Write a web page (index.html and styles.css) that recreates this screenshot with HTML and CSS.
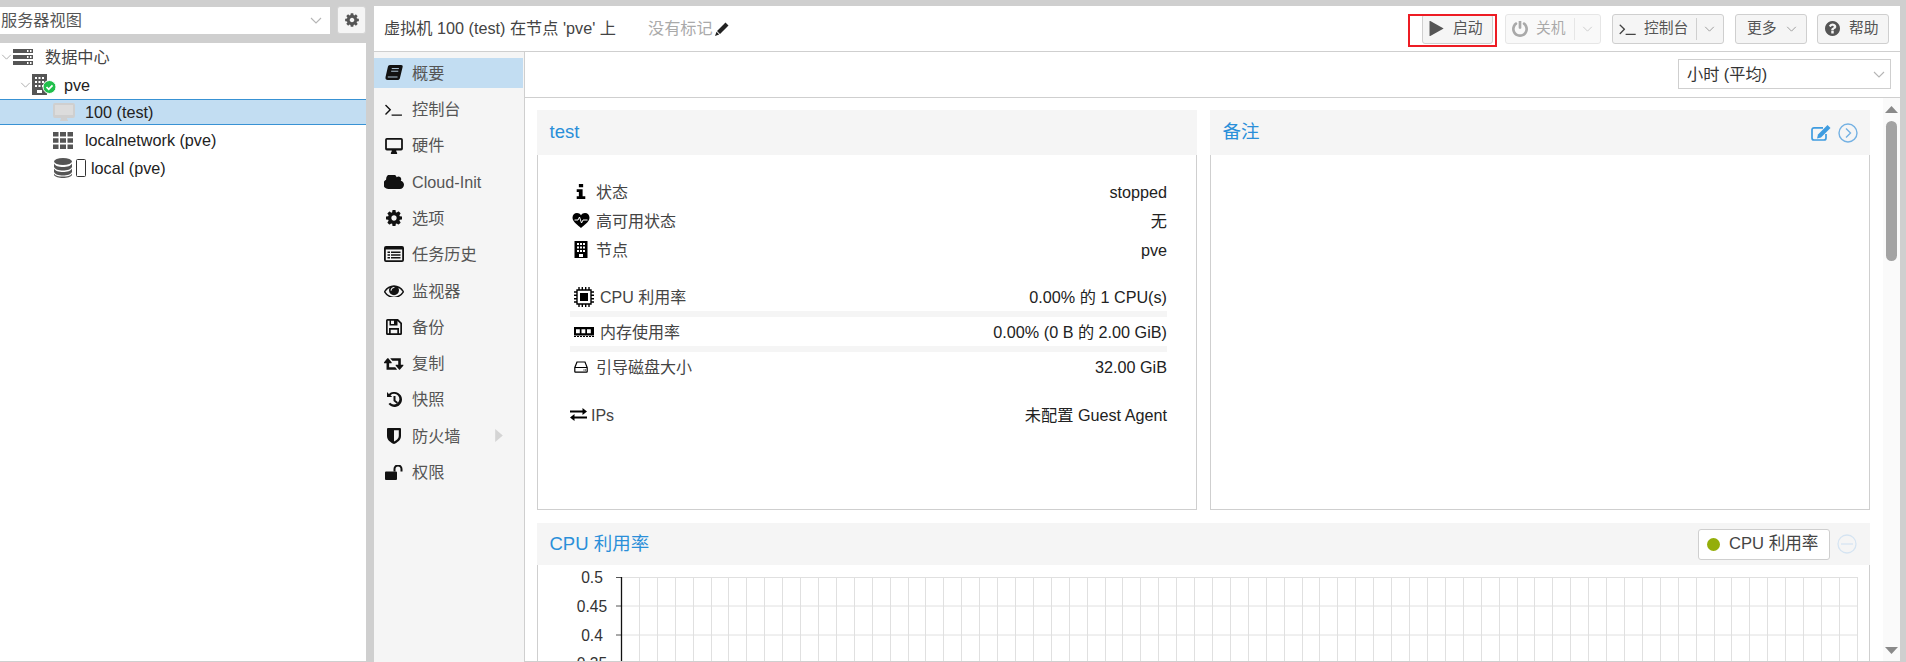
FILE: index.html
```html
<!DOCTYPE html>
<html lang="zh">
<head>
<meta charset="utf-8">
<title>虚拟机 100 (test)</title>
<link rel="stylesheet" href="styles.css">
</head>
<body>
<aside class="left">
  <div class="viewbar">
    <div class="combo"><span>服务器视图</span>
      <svg class="chev chev-combo" viewBox="0 0 12 7"><path d="M1 1l5 5 5-5"/></svg>
    </div>
    <button class="gear"><svg class="ic16" viewBox="0 0 1792 1792"><path d="M1152 896q0-106-75-181t-181-75-181 75-75 181 75 181 181 75 181-75 75-181zm512-109v222q0 12-8 23t-20 13l-185 28q-19 54-39 91 35 50 107 138 10 12 10 25t-9 23q-27 37-99 108t-94 71q-12 0-26-9l-138-108q-44 23-91 38-16 136-29 186-7 28-36 28h-222q-14 0-24.5-8.5t-11.5-21.5l-28-184q-49-16-90-37l-141 107q-10 9-25 9-14 0-25-11-126-114-165-168-7-10-7-23 0-12 8-23 15-21 51-66.5t54-70.5q-27-50-41-99l-183-27q-13-2-21-12.5t-8-23.5v-222q0-12 8-23t19-13l186-28q14-46 39-92-40-57-107-138-10-12-10-24 0-10 9-23 26-36 98.5-107.5t94.5-71.5q13 0 26 10l138 107q44-23 91-38 16-136 29-186 7-28 36-28h222q14 0 24.5 8.5t11.5 21.5l28 184q49 16 90 37l142-107q9-9 24-9 13 0 25 10 129 119 165 170 7 8 7 22 0 12-8 23-15 21-51 66.5t-54 70.5q26 50 41 98l183 28q13 2 21 12.5t8 23.5z"/></svg></button>
  </div>
  <div class="tree">
    <div class="node lv0">
      <svg class="chev chev-tree" viewBox="0 0 12 7"><path d="M1 1l5 5 5-5"/></svg>
      <svg class="ti ti-dc" viewBox="0 0 20 16"><path d="M0 0h20v4H0zM0 6h20v4H0zM0 12h20v4H0z"/><path class="hole" d="M14 1h1.500v2H14zM17 1h1.500v2H17zM14 7h1.500v2H14zM17 7h1.500v2H17zM14 13h1.500v2H14zM17 13h1.500v2H17z"/></svg>
      <span class="dc-label">数据中心</span>
    </div>
    <div class="node lv1">
      <svg class="chev chev-tree" viewBox="0 0 12 7"><path d="M1 1l5 5 5-5"/></svg>
      <svg class="ti ti-node" viewBox="0 0 24 21"><path d="M0 0h15v21H0z"/><path class="hole" d="M3 3h2v2H3zM6.500 3h2v2h-2zM10 3h2v2h-2zM3 7h2v2H3zM6.500 7h2v2h-2zM10 7h2v2h-2zM3 11h2v2H3zM6.500 11h2v2h-2zM10 11h2v2h-2zM5 16h5v3H5z"/><circle class="ok-ring" cx="17.500" cy="13" r="6.500"/><path class="ok-tick" d="M14.500 13l2.200 2.300 3.800-4"/></svg>
      <span class="pve-label">pve</span>
    </div>
    <div class="node lv2 sel">
      <svg class="ti ti-vm" viewBox="0 0 22 18"><path d="M2 0h18a2 2 0 0 1 2 2v11a2 2 0 0 1-2 2h-6c0 1 .5 2 1 2.500V18H7v-.5c.5-.5 1-1.500 1-2.500H2a2 2 0 0 1-2-2V2a2 2 0 0 1 2-2z"/><path class="vm-screen" d="M2 2h18v10H2z"/></svg>
      <span class="t-85">100 (test)</span>
    </div>
    <div class="node lv2">
      <svg class="ti ti-grid" viewBox="0 0 20 17"><path d="M0 0h5.500v4.500H0zM7 0h6v4.500H7zM14.500 0H20v4.500h-5.500zM0 6.200h5.500v4.600H0zM7 6.200h6v4.600H7zM14.500 6.200H20v4.600h-5.500zM0 12.500h5.500V17H0zM7 12.500h6V17H7zM14.500 12.500H20V17h-5.500z"/></svg>
      <span class="t-85">localnetwork (pve)</span>
    </div>
    <div class="node lv2 storage">
      <svg class="ti ti-db" viewBox="0 0 18 20"><ellipse cx="9" cy="3.500" rx="9" ry="3.500"/><path d="M0 5.500c1 2.500 5 3.500 9 3.500s8-1 9-3.500V9c-1 2.500-5 3.500-9 3.500S1 11.500 0 9zM0 10.500C1 13 5 14 9 14s8-1 9-3.500V14c-1 2.500-5 3.500-9 3.500S1 16.500 0 14zM0 15.500C1 18 5 18.500 9 18.500s8-.5 9-3V17c-1 2-5 3-9 3s-8-1-9-3z"/></svg>
      <svg class="ti ti-phone" viewBox="0 0 10 18"><rect x=".5" y=".5" width="9" height="17" rx="1"/></svg>
      <span>local (pve)</span>
    </div>
  </div>
</aside>

<div class="center">
  <header class="head">
    <span class="title">虚拟机 100 (test) 在节点 'pve' 上</span>
    <span class="tags">没有标记</span>
    <svg class="pencil" viewBox="0 0 14 14"><path d="M10.500.500l3 3L5 12l-3-3zM1.500 9.800l2.700 2.700L0 14z"/></svg>
    <div class="actions">
      <button class="btn b-start"><svg class="ic-play" viewBox="192 140 1408 1512"><path d="M1576 927l-1328 738q-23 13-39.500 3t-16.500-36v-1472q0-26 16.500-36t39.500 3l1328 738q23 13 23 31t-23 31z"/></svg><span>启动</span></button>
      <button class="btn b-stop" disabled><svg class="ic16" viewBox="128 128 1536 1536"><path d="M1664 896q0 156-61 298t-164 245-245 164-298 61-298-61-245-164-164-245-61-298q0-182 80.500-343t226.500-270q43-32 95.500-25t83.500 50q32 42 24.500 94.500t-49.500 84.500q-98 74-151.500 181t-53.500 228q0 104 40.500 198.500t109.500 163.500 163.500 109.500 198.500 40.500 198.500-40.500 163.500-109.500 109.500-163.500 40.500-198.500q0-121-53.500-228t-151.500-181q-42-32-49.500-84.500t24.500-94.500q31-43 84-50t95 25q146 109 226.500 270t80.500 343zm-640-768v640q0 52-38 90t-90 38-90-38-38-90v-640q0-52 38-90t90-38 90 38 38 90z"/></svg><span>关机</span><i class="split"></i><svg class="chev chev-btn" viewBox="0 0 12 7"><path d="M1 1l5 5 5-5"/></svg></button>
      <button class="btn b-con"><svg class="ic-term" viewBox="64 320 1664 1216"><path d="M649 983l-466 466q-10 10-23 10t-23-10l-50-50q-10-10-10-23t10-23l393-393-393-393q-10-10-10-23t10-23l50-50q10-10 23-10t23 10l466 466q10 10 10 23t-10 23zm1079 457v64q0 14-9 23t-23 9h-960q-14 0-23-9t-9-23v-64q0-14 9-23t23-9h960q14 0 23 9t9 23z"/></svg><span>控制台</span><i class="split"></i><svg class="chev chev-btn" viewBox="0 0 12 7"><path d="M1 1l5 5 5-5"/></svg></button>
      <button class="btn b-more"><span>更多</span><svg class="chev chev-more" viewBox="0 0 12 7"><path d="M1 1l5 5 5-5"/></svg></button>
      <button class="btn b-help"><svg class="ic-help" viewBox="128 128 1536 1536"><path d="M1024 1376v-192q0-14-9-23t-23-9h-192q-14 0-23 9t-9 23v192q0 14 9 23t23 9h192q14 0 23-9t9-23zm256-672q0-88-55.500-163t-138.500-116-170-41q-243 0-371 213-15 24 8 42l132 100q7 6 19 6 16 0 25-12 53-68 86-92 34-24 86-24 48 0 85.500 26t37.500 59q0 38-20 61t-68 45q-63 28-115.500 86.500t-52.500 125.500v36q0 14 9 23t23 9h192q14 0 23-9t9-23q0-19 21.500-49.500t54.500-49.500q32-18 49-28.500t46-35 44.500-48 28-60.500 12.500-81zm384 192q0 209-103 385.500t-279.500 279.500-385.500 103-385.500-103-279.500-279.500-103-385.500 103-385.500 279.500-279.500 385.500-103 385.500 103 279.500 279.500 103 385.500z"/></svg><span>帮助</span></button>
    </div>
    <div class="redbox"></div>
  </header>

  <div class="work">
    <nav class="nav">
      <a class="item active"><svg class="ni" viewBox="0 0 20 18"><path d="M5.500 0H18c1.500 0 2 1 1.700 2.200l-3 12.300c-.3 1.500-1.300 2.500-3 2.500H3C1 17 0 15.500.5 13.500L3 2.500C3.400 1 4.200 0 5.500 0z"/><path class="nh" d="M7.500 4h8M6.800 7h8M3 13.500h11" /></svg><span>概要</span></a>
      <a class="item"><svg class="ni ni-term" viewBox="64 320 1664 1216"><path d="M649 983l-466 466q-10 10-23 10t-23-10l-50-50q-10-10-10-23t10-23l393-393-393-393q-10-10-10-23t10-23l50-50q10-10 23-10t23 10l466 466q10 10 10 23t-10 23zm1079 457v64q0 14-9 23t-23 9h-960q-14 0-23-9t-9-23v-64q0-14 9-23t23-9h960q14 0 23 9t9 23z"/></svg><span>控制台</span></a>
      <a class="item"><svg class="ni" viewBox="0 0 20 18"><path fill-rule="evenodd" d="M2 0h16a2 2 0 0 1 2 2v10a2 2 0 0 1-2 2h-5.500c0 1 .5 2 1 2.500V18h-7v-1.500c.5-.5 1-1.500 1-2.500H2a2 2 0 0 1-2-2V2a2 2 0 0 1 2-2zm0 2v9.500h16V2z"/></svg><span>硬件</span></a>
      <a class="item"><svg class="ni" viewBox="0 256 1856 1280"><path d="M1856 1152q0 159-112.500 271.500t-271.500 112.500h-1088q-185 0-316.500-131.500t-131.500-316.500q0-132 71-241.500t187-163.500q-2-28-2-43 0-212 150-362t362-150q158 0 286.500 88t187.500 230q70-62 166-62 106 0 181 75t75 181q0 75-41 138 129 30 213 134.500t84 239.500z"/></svg><span>Cloud-Init</span></a>
      <a class="item"><svg class="ni ni-gear" viewBox="128 128 1536 1536"><path d="M1152 896q0-106-75-181t-181-75-181 75-75 181 75 181 181 75 181-75 75-181zm512-109v222q0 12-8 23t-20 13l-185 28q-19 54-39 91 35 50 107 138 10 12 10 25t-9 23q-27 37-99 108t-94 71q-12 0-26-9l-138-108q-44 23-91 38-16 136-29 186-7 28-36 28h-222q-14 0-24.500-8.500t-11.500-21.500l-28-184q-49-16-90-37l-141 107q-10 9-25 9-14 0-25-11-126-114-165-168-7-10-7-23 0-12 8-23 15-21 51-66.500t54-70.500q-27-50-41-99l-183-27q-13-2-21-12.500t-8-23.500v-222q0-12 8-23t19-13l186-28q14-46 39-92-40-57-107-138-10-12-10-24 0-10 9-23 26-36 98.500-107.500t94.500-71.500q13 0 26 10l138 107q44-23 91-38 16-136 29-186 7-28 36-28h222q14 0 24.500 8.500t11.500 21.500l28 184q49 16 90 37l142-107q9-9 24-9 13 0 25 10 129 119 165 170 7 8 7 22 0 12-8 23-15 21-51 66.500t-54 70.500q26 50 41 98l183 28q13 2 21 12.500t8 23.500z"/></svg><span>选项</span></a>
      <a class="item"><svg class="ni" viewBox="0 0 20 16"><path fill-rule="evenodd" d="M2 0h16a2 2 0 0 1 2 2v12a2 2 0 0 1-2 2H2a2 2 0 0 1-2-2V2a2 2 0 0 1 2-2zm-.2 3.500v10.700h16.400V3.500zM3.500 5.500h2.500v1.600H3.500zM7 5.500h9.500v1.600H7zM3.500 8.200h2.500v1.600H3.500zM7 8.200h9.500v1.600H7zM3.500 10.900h2.500v1.600H3.500zM7 10.900h9.500v1.600H7z"/></svg><span>任务历史</span></a>
      <a class="item"><svg class="ni" viewBox="0 384 1792 1024"><path d="M1664 960q-152-236-381-353 61 104 61 225 0 185-131.500 316.500t-316.500 131.500-316.500-131.500-131.500-316.500q0-121 61-225-229 117-381 353 133 205 333.500 326.500t434.500 121.500 434.500-121.500 333.500-326.500zm-720-384q0-20-14-34t-34-14q-125 0-214.500 89.500t-89.500 214.500q0 20 14 34t34 14 34-14 14-34q0-86 61-147t147-61q20 0 34-14t14-34zm848 384q0 34-20 69-140 230-376.500 368.500t-499.500 138.500-499.500-139-376.500-368q-20-35-20-69t20-69q140-229 376.500-368t499.500-139 499.500 139 376.500 368q20 35 20 69z"/></svg><span>监视器</span></a>
      <a class="item"><svg class="ni ni-sq" viewBox="0 0 16 16"><path fill-rule="evenodd" d="M1.500 0H12l4 4v10.500a1.500 1.500 0 0 1-1.500 1.500h-13A1.500 1.500 0 0 1 0 14.500v-13A1.500 1.500 0 0 1 1.500 0zm.2 1.700v12.600H3V9h10v5.300h1.300V4.700L11.500 1.900V6.500h-8V1.700zM5 1.700V5h3V1.700zM4.700 10.700v3.600h6.600v-3.600z"/></svg><span>备份</span></a>
      <a class="item"><svg class="ni ni-rt" viewBox="0 256 1856 1280"><path d="M1216 1488q0 13-9.500 22.500t-22.500 9.500h-960q-8 0-13.500-2t-9-7-5.500-8-3-11.500-1-11.500v-600h-192q-26 0-45-19t-19-45q0-24 15-41l320-384q19-22 49-22t49 22l320 384q15 17 15 41 0 26-19 45t-45 19h-192v384h576q16 0 25 11l160 192q7 10 7 21zm640-416q0 24-15 41l-320 384q-20 23-49 23t-49-23l-320-384q-15-17-15-41 0-26 19-45t45-19h192v-384h-576q-16 0-25-12l-160-192q-7-9-7-20 0-13 9.500-22.500t22.500-9.500h960q8 0 13.500 2t9 7 5.500 8 3 11.500 1 11.500v600h192q26 0 45 19t19 45z"/></svg><span>复制</span></a>
      <a class="item"><svg class="ni ni-sq" viewBox="0 0 16 16"><path d="M8.500 0a7.500 7.500 0 1 1-6 12l1.700-1.300A5.300 5.300 0 1 0 4.500 3.200L6.200 5H1V0l1.900 1.900A7.500 7.500 0 0 1 8.500 0z"/><path d="M7.500 4h2v4.200l2.500 2-1.200 1.500-3.300-2.700z"/></svg><span>快照</span></a>
      <a class="item"><svg class="ni ni-shield" viewBox="0 0 14 16"><path fill-rule="evenodd" d="M1 0h12a1 1 0 0 1 1 1v7c0 4-3.500 6.500-7 8-3.500-1.500-7-4-7-8V1a1 1 0 0 1 1-1zm6 2.200v11.400c2.500-1.200 4.800-3 4.800-5.600V2.200z"/></svg><span>防火墙</span><svg class="more" viewBox="0 0 7 12"><path d="M0 0l7 6-7 6z"/></svg></a>
      <a class="item"><svg class="ni" viewBox="0 0 18 15"><path d="M1 6.500h10a1 1 0 0 1 1 1V14a1 1 0 0 1-1 1H1a1 1 0 0 1-1-1V7.500a1 1 0 0 1 1-1z"/><path d="M8.500 6.500V4a4.500 4.500 0 0 1 9 0v2.500H15.500V4a2.500 2.500 0 0 0-5 0v2.500z"/></svg><span>权限</span></a>
    </nav>

    <main class="content">
      <div class="toolbar">
        <div class="select"><span>小时 (平均)</span>
          <svg class="chev chev-sel" viewBox="0 0 12 7"><path d="M1 1l5 5 5-5"/></svg>
        </div>
      </div>
      <div class="scroller">
        <div class="panels">
          <section class="panel">
            <h2 class="ph">test</h2>
            <div class="pb status">
              <div class="row"><span class="lab"><svg class="si" viewBox="0 0 8 14"><path d="M2 0h4v3H2zM0 5h5.500v6.500H8V14H0v-2.500h2V7.500H0z"/></svg><span>状态</span></span><span class="val">stopped</span></div>
              <div class="row"><span class="lab"><svg class="si" viewBox="0 0 17 15"><path d="M8.500 15C6 12.800 0 9 0 4.800 0 2 2 0 4.500 0c1.700 0 3.100.8 4 2.200C9.400.8 10.800 0 12.500 0 15 0 17 2 17 4.800 17 9 11 12.800 8.500 15z"/><path class="pulse" d="M2 7h3.500l1.500-3 2 6 1.500-3H15"/></svg><span>高可用状态</span></span><span class="val">无</span></div>
              <div class="row"><span class="lab"><svg class="si si-b" viewBox="0 0 13 17"><path d="M0 0h13v17H0z"/><path class="hole-w" d="M2.500 2h2v2h-2zM5.500 2h2v2h-2zM8.500 2h2v2h-2zM2.500 5.500h2v2h-2zM5.500 5.500h2v2h-2zM8.500 5.500h2v2h-2zM2.500 9h2v2h-2zM5.500 9h2v2h-2zM8.500 9h2v2h-2zM4.500 13h4v3h-4z"/></svg><span>节点</span></span><span class="val">pve</span></div>

              <div class="row r-cpu"><span class="lab"><svg class="wi" viewBox="0 0 20 20"><path d="M3 3h14v14H3z" class="chip"/><path d="M6 6h8v8H6z"/><path class="legs" d="M5 0v3M8.300 0v3M11.700 0v3M15 0v3M5 17v3M8.300 17v3M11.700 17v3M15 17v3M0 5h3M0 8.300h3M0 11.700h3M0 15h3M17 5h3M17 8.300h3M17 11.700h3M17 15h3"/></svg><span>CPU 利用率</span></span><span class="val">0.00% 的 1 CPU(s)</span></div>
              <div class="bar"></div>
              <div class="row r-mem"><span class="lab"><svg class="wi wi-m" viewBox="0 0 20 10"><path fill-rule="evenodd" d="M0 0h20v8.500H0zM2 2.200v4h3.800v-4zM7.500 2.200v4h3.800v-4zM13 2.200v4h3.800v-4zM0 9h2v1H0zM3 9h2v1H3zM6 9h2v1H6zM9 9h2v1H9zM12 9h2v1h-2zM15 9h2v1h-2zM18 9h2v1h-2z"/></svg><span>内存使用率</span></span><span class="val">0.00% (0 B 的 2.00 GiB)</span></div>
              <div class="bar"></div>
              <div class="row"><span class="lab"><svg class="si si-h" viewBox="0 0 14 12"><path class="hdd" d="M.8 6.500 3 1h8l2.200 5.500v4a.7.700 0 0 1-.7.700h-11a.7.700 0 0 1-.7-.7zM.8 6.500h12.400"/><path d="M9.500 8.500h1v1h-1zM11 8.500h1v1h-1z"/></svg><span>引导磁盘大小</span></span><span class="val">32.00 GiB</span></div>

              <div class="row r-ip"><span class="lab"><svg class="xi" viewBox="0 0 17 13"><path d="M12.500 0L17 3.500 12.500 7V4.500H0v-2h12.500zM4.500 6v2.500H17v2H4.500V13L0 9.500z"/></svg><span>IPs</span></span><span class="val">未配置 Guest Agent</span></div>
            </div>
          </section>
          <section class="panel">
            <h2 class="ph"><span>备注</span>
              <span class="tools">
                <svg class="tool-edit" viewBox="0 0 20 16"><path class="edit-box" d="M12 2.800H3a2 2 0 0 0-2 2v8.200a2 2 0 0 0 2 2h10a2 2 0 0 0 2-2V9"/><path d="M16.500 0l3 3L10 12.500l-4 1 1-4z"/></svg>
                <svg class="tool-circ" viewBox="0 0 20 20"><circle cx="10" cy="10" r="9"/><path d="M8 5.500l4.500 4.500L8 14.500"/></svg>
              </span>
            </h2>
            <div class="pb"></div>
          </section>
          <section class="panel wide">
            <h2 class="ph ph-cpu"><span>CPU 利用率</span>
              <span class="tools">
                <span class="legend"><i class="dot"></i>CPU 利用率</span>
                <svg class="tool-min" viewBox="0 0 20 20"><circle cx="10" cy="10" r="9"/><path d="M4 10h12"/></svg>
              </span>
            </h2>
            <div class="pb chart-body">
              <svg class="chart" viewBox="0 0 1333 96">
                <path class="grid" d="M102.500 12V96M120.500 12V96M138.500 12V96M156.500 12V96M174.500 12V96M191.500 12V96M209.500 12V96M227.500 12V96M245.500 12V96M263.500 12V96M281.500 12V96M299.500 12V96M317.500 12V96M335.500 12V96M353.500 12V96M371.500 12V96M388.500 12V96M406.500 12V96M424.500 12V96M442.500 12V96M460.500 12V96M478.500 12V96M496.500 12V96M514.500 12V96M532.500 12V96M550.500 12V96M568.500 12V96M585.500 12V96M603.500 12V96M621.500 12V96M639.500 12V96M657.500 12V96M675.500 12V96M693.500 12V96M711.500 12V96M729.500 12V96M747.500 12V96M765.500 12V96M782.500 12V96M800.500 12V96M818.500 12V96M836.500 12V96M854.500 12V96M872.500 12V96M890.500 12V96M908.500 12V96M926.500 12V96M944.500 12V96M962.500 12V96M980.500 12V96M997.500 12V96M1015.500 12V96M1033.500 12V96M1051.500 12V96M1069.500 12V96M1087.500 12V96M1105.500 12V96M1123.500 12V96M1141.500 12V96M1159.500 12V96M1177.500 12V96M1194.500 12V96M1212.500 12V96M1230.500 12V96M1248.500 12V96M1266.500 12V96M1284.500 12V96M1302.500 12V96M1320.500 12V96M84 12.500H1321M84 41H1321M84 70H1321"/>
                <path class="ticks" d="M79 12.500h5M79 41h5M79 70h5"/>
                <path class="axis" d="M84.500 12V96"/>
                <text x="55" y="18">0.5</text>
                <text x="55" y="47">0.45</text>
                <text x="55" y="76">0.4</text>
                <text x="55" y="104">0.35</text>
              </svg>
            </div>
          </section>
        </div>
        <div class="scrollbar">
          <svg class="sb-arrow" viewBox="0 0 13 7"><path d="M6.500 0L13 7H0z"/></svg>
          <div class="thumb"></div>
          <svg class="sb-arrow sb-down" viewBox="0 0 13 7"><path d="M0 0h13L6.500 7z"/></svg>
        </div>
      </div>
    </main>
  </div>
</div>
</body>
</html>
```

FILE: styles.css
```css
* { box-sizing: border-box; }
html, body { margin: 0; height: 100%; }
body {
  display: flex;
  gap: 8px;
  height: 662px;
  padding: 6px 6px 0 0;
  overflow: hidden;
  background: #cfcfcf;
  font: 16.2px/1.2 "Liberation Sans", "Noto Sans CJK SC", sans-serif;
  color: #222;
}
svg { display: block; flex: none; fill: currentColor; }

/* left tree */
.left { width: 366px; display: flex; flex-direction: column; }
.viewbar { display: flex; height: 28px; margin-bottom: 9px; gap: 7px; padding-top: 1px; }
.combo {
  width: 330px; height: 27px; background: #fff; color: #555;
  display: flex; align-items: center; justify-content: space-between;
  padding: 0 8px 0 1px;
}
.chev { fill: none; stroke: #b5b5b5; stroke-width: 1.1; }
.chev-combo { width: 12px; height: 7px; }
.gear {
  width: 29px; height: 28px; margin-top: -1px; padding: 0; background: #f5f5f5;
  border: 1px solid #d4d4d4; border-radius: 3px; color: #555;
  display: flex; align-items: center; justify-content: center;
}
.ic16 { width: 16px; height: 16px; }
.tree { flex: 1; background: #fff; border-bottom: 1px solid #cfcfcf; color: #222; }
.node { height: 27.75px; display: flex; align-items: center; }
.node span { padding-top: 2px; }
.lv0 { padding-left: 1px; }
.lv1 { padding-left: 20px; }
.lv2 { padding-left: 53px; }
.chev-tree { width: 11px; height: 6px; margin-right: 1px; stroke: #aaa; }
.ti { color: #555; }
.ti-dc { width: 20px; height: 16px; margin-right: 12px; }
.dc-label { color: #444; }
.hole { fill: #fff; }
.ti-node { width: 24px; height: 21px; margin-right: 8px; }
.ok-ring { fill: #21bf4b; stroke: #fff; stroke-width: 1; }
.ok-tick { fill: none; stroke: #fff; stroke-width: 1.8; }
.sel {
  height: 26.5px; margin-bottom: 1.25px;
  background: #c2ddf2;
  border-top: 1px solid #3892d4; border-bottom: 1px solid #3892d4;
}
.ti-vm { width: 22px; height: 18px; margin-right: 10px; color: #cfcfcf; }
.vm-screen { fill: #dcdcdc; }
.ti-grid { width: 20px; height: 17px; margin-right: 12px; }
.storage { padding-left: 54px; }
.ti-db { width: 18px; height: 20px; margin-right: 4px; }
.ti-phone { width: 10px; height: 18px; margin-right: 5px; fill: none; stroke: #333; stroke-width: 1; }

/* right side */
.center { flex: 1; min-width: 0; display: flex; flex-direction: column; background: #fff; }
.head {
  position: relative; height: 46px; flex: none;
  display: flex; align-items: center; padding: 0 11px 0 10px;
  border-bottom: 1px solid #cfcfcf; color: #444;
}
.title { width: 264px; flex: none; white-space: nowrap; }
.tags { color: #aaa; margin-right: 2px; }
.pencil { width: 14px; height: 14px; color: #222; }
.actions { margin-left: auto; display: flex; gap: 11px; }
.btn {
  height: 30px; padding: 0 0 0 8px; display: flex; align-items: center; gap: 9px;
  background: #f5f5f5; border: 1px solid #cfcfcf; border-radius: 3px;
  font: inherit; font-size: 14.8px; color: #555;
}
.b-start { width: 71px; padding-left: 6px; }
.b-stop { width: 96px; gap: 8px; padding-left: 6px; opacity: .5; margin-left: 1px; }
.b-con { width: 112px; gap: 8px; padding-left: 6px; }
.b-more { width: 72px; padding-left: 11px; }
.b-help { width: 72px; margin-left: -1px; padding-left: 7px; }
.ic-play { width: 15px; height: 15px; }
.ic-help { width: 15px; height: 15px; }
.ic-term { width: 17px; height: 12px; color: #444; }
.split { width: 1px; height: 22px; background: #cfcfcf; }
.chev-btn { width: 11px; height: 6px; margin-left: -1px; stroke: #999; }
.chev-more { width: 11px; height: 6px; stroke: #999; }
.redbox {
  position: absolute; top: 8px; right: 403px; width: 89px; height: 33px;
  border: 2.5px solid #ed1c24;
}

.work { flex: 1; min-height: 0; display: flex; }
.nav {
  width: 151px; flex: none; padding: 6px 1px 0 0;
  background: #f5f5f5; border-right: 1px solid #cfcfcf;
  display: flex; flex-direction: column; gap: 6.3px; color: #555;
}
.item { height: 30px; display: flex; align-items: center; padding-left: 10px; flex: none; }
.item span { padding-top: 1px; }
.item.active { background: #c2ddf2; }
.ni { width: 20px; height: 16px; margin-right: 8px; color: #111; }
.nh { fill: none; stroke: #c2ddf2; stroke-width: 1; }
.ni-term { height: 13px; width: 17px; margin-left: 1px; margin-right: 10px; }
.ni-gear, .ni-sq { width: 16px; height: 16px; margin-left: 2px; margin-right: 10px; }
.ni-shield { width: 14px; height: 16px; margin-left: 3px; margin-right: 11px; }
.more { width: 8px; height: 13px; margin-left: auto; margin-right: 20px; color: #d4d4d4; }
.item:nth-child(4) .ni { height: 14px; }
.item:nth-child(7) .ni { height: 12px; }
.item:nth-child(9) .ni { height: 13px; }
.item:nth-child(12) .ni { height: 15px; width: 18px; margin-left: 1px; margin-right: 9px; }

.content { flex: 1; min-width: 0; display: flex; flex-direction: column; }
.toolbar {
  height: 46px; flex: none; display: flex; justify-content: flex-end; align-items: flex-start;
  padding: 7px 9px 0 0; border-bottom: 1px solid #cfcfcf;
}
.select {
  width: 213px; height: 30px; border: 1px solid #cfcfcf; color: #333;
  display: flex; align-items: center; justify-content: space-between; padding: 0 5px 0 8px;
}
.select span { padding-top: 2px; }
.chev-sel { width: 12px; height: 7px; }

.scroller { flex: 1; min-height: 0; display: flex; border-bottom: 1px solid #cfcfcf; }
.panels {
  flex: 1; min-width: 0; overflow: hidden; padding: 12px 13px 0 12px;
  display: grid; grid-template-columns: 1fr 1fr; grid-template-rows: 400px auto; gap: 13px; align-content: start;
}
.panel { display: flex; flex-direction: column; min-width: 0; }
.wide { grid-column: 1 / -1; height: 200px; }
.ph {
  margin: 0; height: 45px; flex: none; background: #f5f5f5;
  font-size: 18.5px; font-weight: 400; color: #2a8fd9;
  display: flex; align-items: center; justify-content: space-between; padding: 0 12px 0 12.500px;
}
.ph-cpu { height: 42px; }
.pb { flex: 1; border: 1px solid #cfcfcf; border-top: 0; min-height: 0; }
.tools { display: flex; align-items: center; }

.status { padding: 22px 29px 0 32px; color: #222; }
.row { height: 29px; display: flex; align-items: center; justify-content: space-between; }
.val { padding-top: 2px; }
.lab { display: flex; align-items: center; color: #444; font-size: 16px; }
.lab span { padding-top: 2px; }
.si { width: 22px; height: 15px; margin-right: 4px; color: #000; }
.si-b { height: 17px; }
.si-h { height: 12px; }
.hdd { fill: none; stroke: #000; stroke-width: 1.200; }
.pulse { fill: none; stroke: #fff; stroke-width: 1; }
.hole-w { fill: #fff; }
.r-cpu { margin-top: 18px; }
.wi { width: 20px; height: 20px; margin: 0 6px 0 4px; color: #000; }
.wi-m { height: 10px; }
.chip { fill: #fff; stroke: #000; stroke-width: 1.400; }
.legs { fill: none; stroke: #000; stroke-width: 1.400; }
.bar { height: 6px; background: #f5f5f5; }
.r-ip { margin-top: 19px; }
.xi { width: 17px; height: 13px; margin-right: 4px; color: #000; }

.tool-edit { width: 20px; height: 16px; color: #3f9ce0; }
.edit-box { fill: none; stroke: currentColor; stroke-width: 1.700; }
.tool-circ {
  width: 20px; height: 20px; margin-left: 7px; fill: none; stroke: #74b1e3; stroke-width: 1.400;
}
.legend {
  width: 132px; height: 31px; display: flex; align-items: center; gap: 9px; padding-left: 8px;
  background: #fff; border: 1px solid #cfcfcf; border-radius: 3px; color: #444; font-size: 16.6px;
}
.dot { width: 13px; height: 13px; border-radius: 50%; background: #94ae0a; }
.tool-min {
  width: 20px; height: 20px; margin-left: 7px; margin-right: 1px; fill: none; stroke: #d5e4f2; stroke-width: 1.300;
}
.chart-body { overflow: hidden; border-bottom: 0; }
.chart { width: 1333px; height: 96px; overflow: hidden; margin-left: -1px; }
.chart text { font-size: 15.6px; fill: #333; text-anchor: middle; }
.grid { fill: none; stroke: #e0e0e0; stroke-width: 1; }
.ticks { fill: none; stroke: #555; stroke-width: 1; }
.axis { fill: none; stroke: #111; stroke-width: 1.300; }

.scrollbar {
  width: 17px; flex: none; background: #fafafa;
  display: flex; flex-direction: column; align-items: center; padding-top: 8px;
}
.sb-arrow { width: 13px; height: 7px; color: #8a8a8a; }
.thumb { width: 11px; height: 140px; margin-top: 8px; border-radius: 6px; background: #a3a3a3; }
.sb-down { margin-top: auto; margin-bottom: 7px; }
```
